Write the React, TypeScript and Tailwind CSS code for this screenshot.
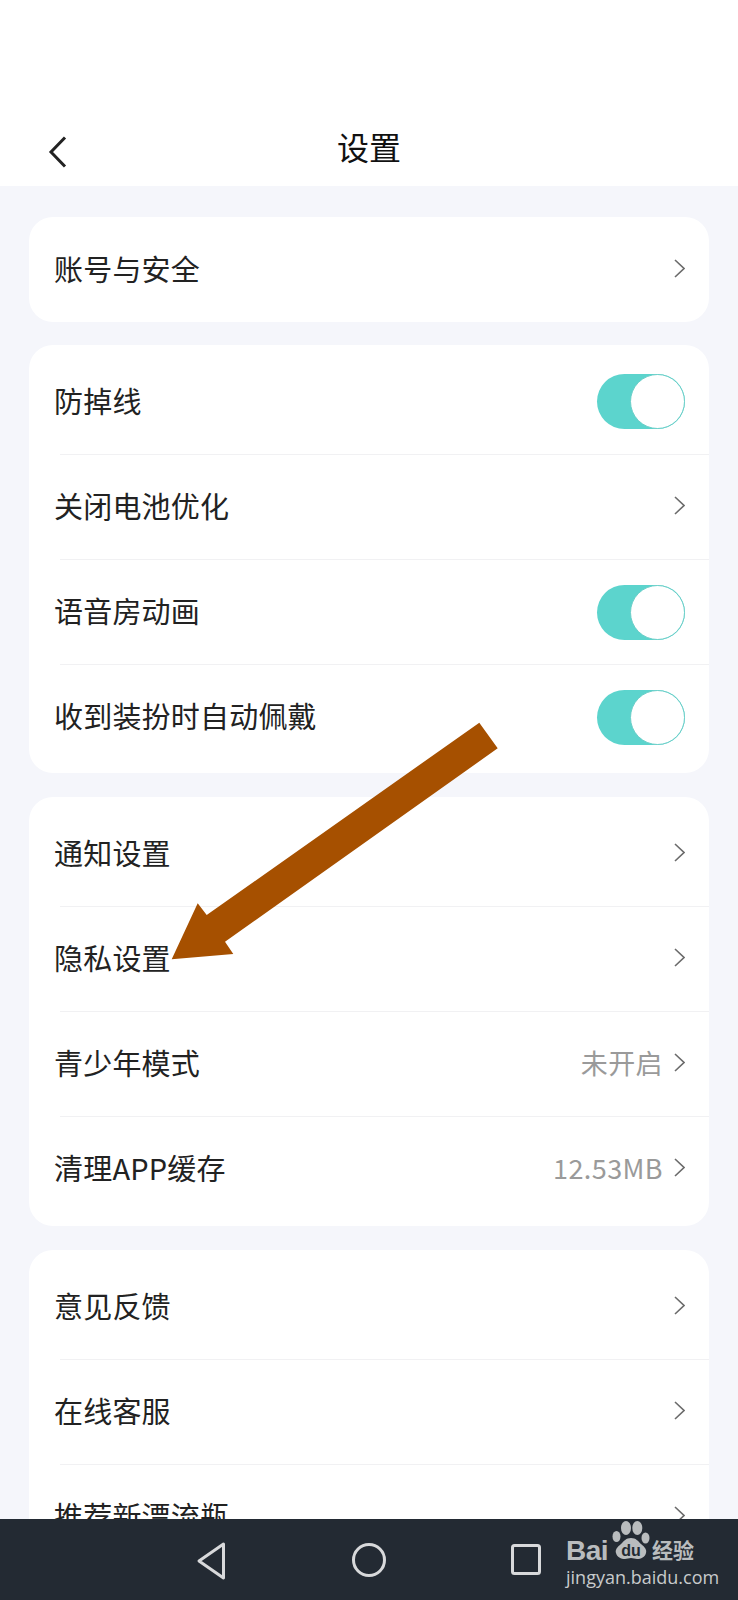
import clsx from 'clsx';

const cn = '"Noto Sans CJK SC", "Noto Sans", sans-serif';

function Arrow() {
  return (
    <svg width="11" height="19" viewBox="0 0 11 19" fill="none" className="ml-[11px] mr-[2px] shrink-0">
      <path d="M1 1l9 8.500L1 18" stroke="#6b6b6b" strokeWidth="1.6" />
    </svg>
  );
}

function Toggle() {
  return (
    <div className="w-[88px] h-[55px] rounded-full bg-[#5cd4cd] flex justify-end mr-[2px] mt-[3px]">
      <div className="w-[55px] h-[55px] rounded-full bg-white border border-[#6ccfc9]" />
    </div>
  );
}

function Row({
  label,
  value,
  toggle,
  first,
}: {
  label: string;
  value?: string;
  toggle?: boolean;
  first?: boolean;
}) {
  return (
    <div className={clsx('relative h-[105px] flex items-center pl-[25px] pr-[22px]', first ? 'pb-[3px]' : 'pb-[2px]')}>
      {!first && <div className="absolute top-0 left-[31px] right-0 h-px bg-[#f1f1f3]" />}
      <span className="flex-1 text-[29px] leading-none tracking-[0.2px] text-[#222]">{label}</span>
      {value && <span className="text-[27px] leading-none tracking-[0.4px] text-[#9a9a9a]">{value}</span>}
      {toggle ? <Toggle /> : <Arrow />}
    </div>
  );
}

function Watermark() {
  return (
    <div className="absolute left-[566px] top-[1522px] w-[134px] h-[64px] text-[#b9bcbe]">
      <div className="flex items-end h-[41px]">
        <span className="text-[28px] leading-[24px] font-bold tracking-[-0.5px]" style={{ fontFamily: '"Liberation Sans", sans-serif' }}>
          Bai
        </span>
        <svg width="38" height="38" viewBox="0 0 38 38" className="ml-[4px] mb-[4px] shrink-0">
          <ellipse cx="14" cy="7" rx="5" ry="7" fill="#b9bcbe" />
          <ellipse cx="25.300" cy="7" rx="5" ry="7" fill="#b9bcbe" />
          <ellipse cx="4.500" cy="15.500" rx="4" ry="5.500" fill="#b9bcbe" />
          <ellipse cx="33.500" cy="17" rx="4" ry="5.500" fill="#b9bcbe" />
          <path d="M19 17c5 0 7 3 10 6 4 3 6 6 5 9-1 4-5 6-9 6-2 0-4-1-6-1s-4 1-6 1c-4 0-8-2-9-6-1-3 1-6 5-9 3-3 5-6 10-6z" fill="#b9bcbe" />
          <text x="19" y="35" textAnchor="middle" fontSize="16" fontWeight="700" fill="#232a33" fontFamily="Liberation Sans, sans-serif">
            du
          </text>
        </svg>
        <span className="ml-[2px] mb-[3px] text-[21px] leading-[22px] font-bold">经验</span>
      </div>
      <div className="mt-[4px] text-[18px] leading-[20px] text-[#c8cacc]" style={{ fontFamily: '"Open Sans", sans-serif' }}>
        jingyan.baidu.com
      </div>
    </div>
  );
}

export default function App() {
  return (
    <div className="w-[738px] h-[1600px] flex flex-col relative overflow-hidden bg-[#f5f6fb]" style={{ fontFamily: cn }}>
      <div className="h-[186px] shrink-0 bg-white pt-[108px] relative">
        <div className="h-[76px] flex items-center justify-center text-[32px] text-[#111]">设置</div>
        <svg width="20" height="32" viewBox="0 0 20 32" fill="none" className="absolute left-[48px] top-[136px]">
          <path d="M17 1.500L3 16l14 14.500" stroke="#222" strokeWidth="3" />
        </svg>
      </div>

      <div className="flex-1 min-h-0 overflow-hidden px-[29px] pt-[31px] flex flex-col gap-[24px]">
        <div className="bg-white rounded-[24px] shrink-0">
          <Row label="账号与安全" first />
        </div>
        <div className="bg-white rounded-[24px] py-[4px] mt-[-1px] shrink-0">
          <Row label="防掉线" toggle first />
          <Row label="关闭电池优化" />
          <Row label="语音房动画" toggle />
          <Row label="收到装扮时自动佩戴" toggle />
        </div>
        <div className="bg-white rounded-[24px] pt-[4px] pb-[5px] shrink-0">
          <Row label="通知设置" first />
          <Row label="隐私设置" />
          <Row label="青少年模式" value="未开启" />
          <Row label="清理APP缓存" value="12.53MB" />
        </div>
        <div className="bg-white rounded-[24px] py-[4px] shrink-0">
          <Row label="意见反馈" first />
          <Row label="在线客服" />
          <Row label="推荐新漂流瓶" />
        </div>
      </div>

      <div className="h-[81px] shrink-0 bg-[#232a33] relative">
        <svg width="738" height="81" viewBox="0 0 738 81" fill="none" className="absolute left-0 top-0">
          <path d="M223.500 25L199 42l24.500 17z" stroke="#d8d9db" strokeWidth="3" strokeLinejoin="round" />
          <circle cx="369" cy="41" r="15.500" stroke="#d8d9db" strokeWidth="3" />
          <rect x="512.500" y="26.500" width="27" height="28" rx="2" stroke="#d8d9db" strokeWidth="3" />
        </svg>
      </div>

      <svg width="738" height="1600" viewBox="0 0 738 1600" className="absolute left-0 top-0 pointer-events-none">
        <polygon
          points="479.300,722.700 497.700,748.300 225,941.700 233.300,954 171.700,959.300 197.700,903.300 206.700,915"
          fill="#a65000"
        />
      </svg>

      <Watermark />
    </div>
  );
}
